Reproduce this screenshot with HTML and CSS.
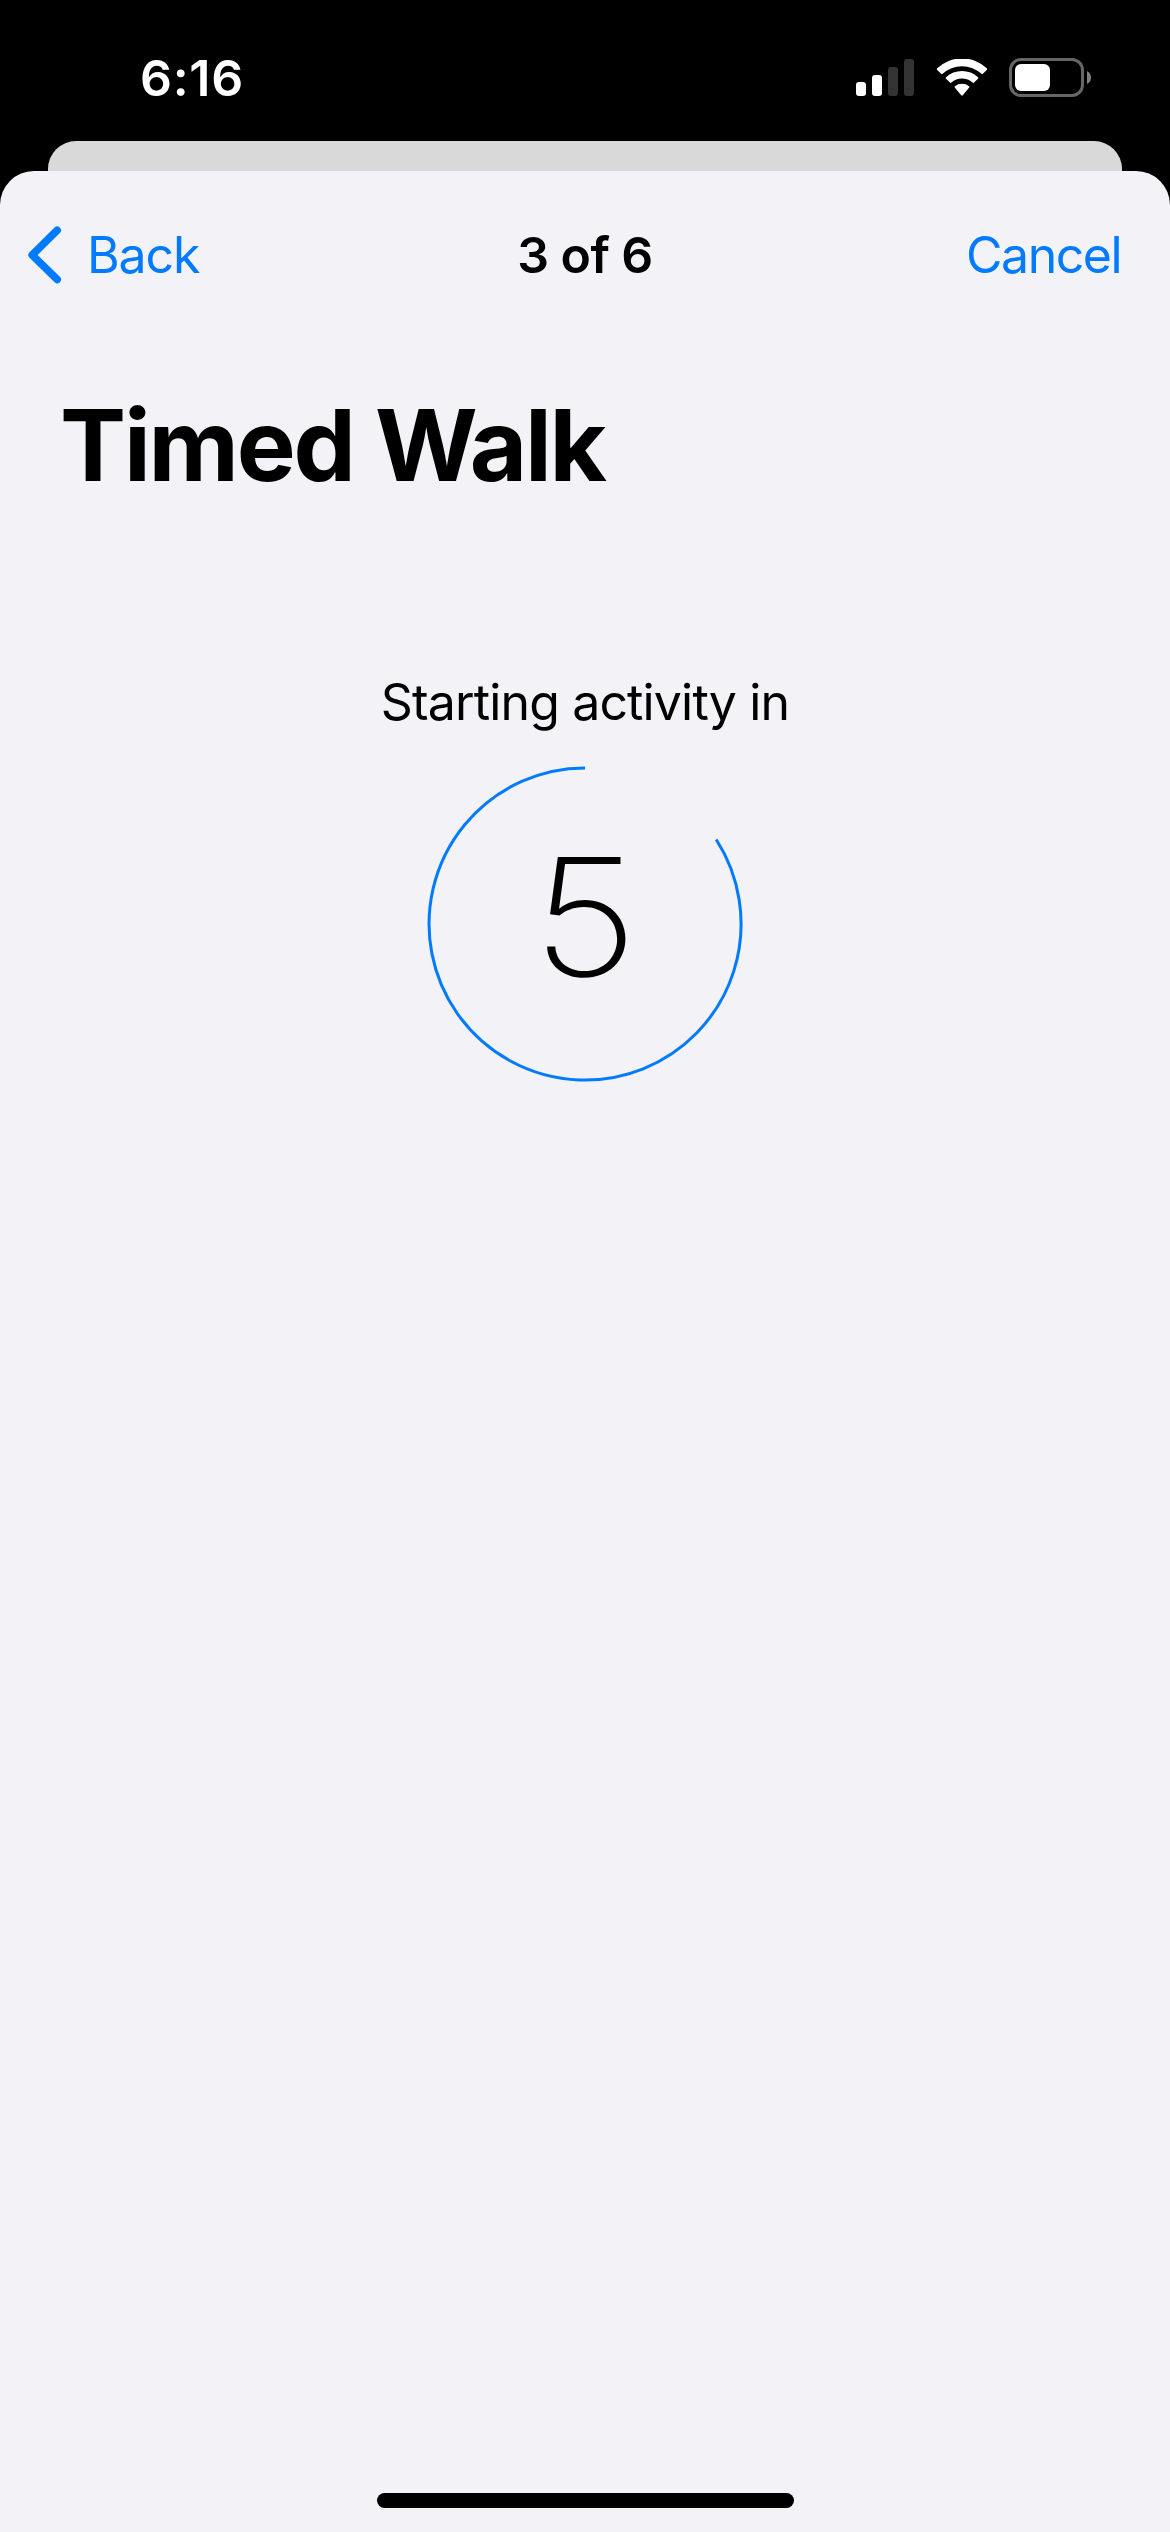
FILE: index.html
```html
<!DOCTYPE html>
<html lang="en">
<head>
<meta charset="utf-8">
<title>Timed Walk</title>
<link rel="stylesheet" href="styles.css">
</head>
<body>
<div class="status-bar">
  <span class="time">6:16</span>
  <div class="status-icons">
    <svg class="signal" viewBox="0 0 58 38" width="58" height="38" aria-hidden="true">
      <rect x="0" y="23" width="10" height="14" rx="3" fill="#fff"/>
      <rect x="16" y="16" width="10" height="21" rx="3" fill="#fff"/>
      <rect x="32" y="8" width="10" height="29" rx="3" fill="#333"/>
      <rect x="48" y="0" width="10" height="37" rx="3" fill="#333"/>
    </svg>
    <svg class="wifi" viewBox="0 0 52 38" width="52" height="38" aria-hidden="true" fill="#fff">
      <path d="M1.2 10.9 Q0.4 10.1 1.2 9.3 A36 36 0 0 1 50.8 9.3 Q51.6 10.1 50.8 10.9 L46.9 14.8 Q46.2 15.5 45.4 14.8 A28.5 28.5 0 0 0 6.6 14.8 Q5.8 15.5 5.1 14.8 Z"/>
      <path d="M10 19.7 Q9.2 18.9 10 18.2 A23.5 23.5 0 0 1 42 18.2 Q42.8 18.9 42 19.7 L38.1 23.6 Q37.4 24.3 36.6 23.6 A15.7 15.7 0 0 0 15.4 23.6 Q14.6 24.3 13.9 23.6 Z"/>
      <path d="M18.8 28.6 Q18 27.8 18.9 27.2 A11.5 11.5 0 0 1 33.1 27.2 Q34 27.8 33.2 28.6 L26.8 36.3 Q26 37.2 25.2 36.3 Z"/>
    </svg>
    <svg class="battery" viewBox="0 0 83 39" width="83" height="39" aria-hidden="true">
      <rect x="1.5" y="1.5" width="72" height="36" rx="10.5" fill="none" stroke="#666" stroke-width="3"/>
      <rect x="6" y="6" width="35" height="27" rx="6" fill="#fff"/>
      <path d="M78 13 Q82 15 82 19.5 Q82 24 78 26 Z" fill="#808080"/>
    </svg>
  </div>
</div>
<div class="card-behind"></div>
<main class="sheet">
  <nav class="nav">
    <a class="back">
      <svg viewBox="0 0 36 60" width="36" height="60" aria-hidden="true">
        <path d="M29.2 5.3 L4.2 30 L29.2 54.5" fill="none" stroke="#007aff" stroke-width="7.6" stroke-linecap="round" stroke-linejoin="round"/>
      </svg>
      <span class="back-label">Back</span>
    </a>
    <span class="step">3 of 6</span>
    <a class="cancel">Cancel</a>
  </nav>
  <h1 class="title">Timed Walk</h1>
  <p class="caption">Starting activity in</p>
  <div class="countdown">
    <svg class="ring" viewBox="0 0 318 318" width="318" height="318" aria-hidden="true">
      <path d="M290.2 74.5 A156 156 0 1 1 159 3" fill="none" stroke="#007aff" stroke-width="3"/>
    </svg>
    <span class="number">5</span>
  </div>
  <div class="home-indicator"></div>
</main>
</body>
</html>
```

FILE: styles.css
```css
* {
  box-sizing: border-box;
}

body {
  margin: 0;
  width: 1170px;
  height: 2532px;
  display: flex;
  flex-direction: column;
  overflow: hidden;
  background: #000;
  font-family: Inter, "Liberation Sans", sans-serif;
  font-size: 50px;
  line-height: 60px;
  color: #000;
  white-space: nowrap;
}

.status-bar {
  display: flex;
  justify-content: space-between;
  align-items: flex-start;
  height: 141px;
  padding: 48px 78px 0 140px;
  color: #fff;
}

.time {
  font-weight: 600;
  letter-spacing: 0.7px;
}

.status-icons {
  display: flex;
  align-items: flex-start;
  padding-top: 10px;
}

.signal {
  margin-top: 1px;
}

.wifi {
  margin: 1px 21px 0 22px;
}

.card-behind {
  height: 30px;
  margin: 0 48px;
  border-radius: 28px 28px 0 0;
  background: #d9d9d9;
}

.sheet {
  flex: 1;
  display: flex;
  flex-direction: column;
  align-items: center;
  padding: 44px 0 24px;
  border-radius: 34px 34px 0 0;
  background: #f2f2f7;
}

.nav {
  display: grid;
  grid-template-columns: 1fr auto 1fr;
  align-items: center;
  width: 100%;
  height: 80px;
}

.back {
  display: flex;
  align-items: center;
  gap: 23px;
  padding-left: 28px;
}

.back,
.cancel {
  color: #007aff;
}

.back-label {
  letter-spacing: -1.1px;
}

.step {
  font-weight: 600;
  letter-spacing: -0.6px;
}

.cancel {
  justify-self: end;
  padding-right: 49px;
  letter-spacing: -1.5px;
}

.title {
  align-self: flex-start;
  margin: 90px 0 0 60px;
  font-size: 99px;
  line-height: 120px;
  font-weight: 700;
  letter-spacing: -2.2px;
}

.caption {
  margin: 167px 0 0;
  letter-spacing: -0.85px;
}

.countdown {
  display: grid;
  place-items: center;
  margin-top: 33px;
}

.ring,
.number {
  grid-area: 1 / 1;
}

.number {
  margin-bottom: 14px;
  font-size: 163px;
  line-height: 200px;
  font-weight: 200;
  transform: scaleX(1.12);
}

.home-indicator {
  width: 417px;
  height: 15px;
  margin-top: auto;
  border-radius: 8px;
  background: #000;
}
```
